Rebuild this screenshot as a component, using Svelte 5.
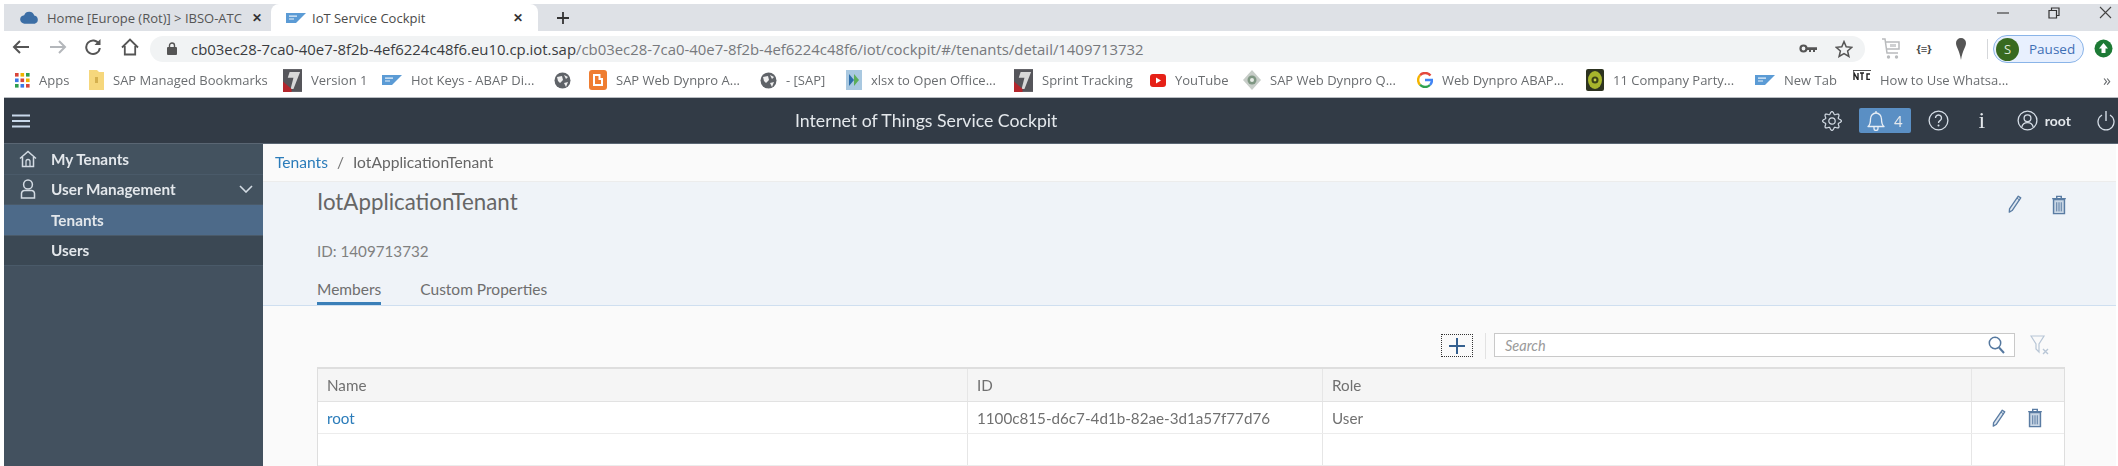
<script lang="ts">
    // bookmarks bar: w is the slot width up to the next item
    const bookmarks = [
        { icon: 'apps', label: 'Apps', w: 74 },
        { icon: 'folder', label: 'SAP Managed Bookmarks', w: 194 },
        { icon: 'flag', label: 'Version 1', w: 99 },
        { icon: 'sap', label: 'Hot Keys - ABAP Di...', w: 172 },
        { icon: 'globe', label: '', w: 35 },
        { icon: 'blogger', label: 'SAP Web Dynpro A...', w: 171 },
        { icon: 'globe', label: '- [SAP]', w: 86 },
        { icon: 'xlsx', label: 'xlsx to Open Office...', w: 168 },
        { icon: 'flag', label: 'Sprint Tracking', w: 136 },
        { icon: 'yt', label: 'YouTube', w: 93 },
        { icon: 'diamond', label: 'SAP Web Dynpro Q...', w: 174 },
        { icon: 'g', label: 'Web Dynpro ABAP...', w: 169 },
        { icon: 'party', label: '11 Company Party...', w: 169 },
        { icon: 'sap', label: 'New Tab', w: 98 },
        { icon: 'ntc', label: 'How to Use Whatsa...', w: 0 },
    ];
    const menu = [
        { label: 'Tenants', cls: 'selected' },
        { label: 'Users', cls: 'sub' },
    ];

    // soft eight-lobed outline for the settings cog
    const gearPath = Array.from({ length: 96 }, (_, i) => {
        const a = (i / 96) * Math.PI * 2;
        const r = 8.1 + 1.3 * Math.cos(a * 8);
        return `${i ? 'L' : 'M'}${(10 + r * Math.cos(a)).toFixed(2)} ${(10 + r * Math.sin(a)).toFixed(2)}`;
    }).join('') + 'Z';
</script>

{#snippet sapLogo()}
    <svg width="20" height="10" viewBox="0 0 20 10">
        <path d="M0 0H20L10 10H0Z" fill="#5b9bd5" />
        <path d="M3 3.2H11M3 6H8" stroke="#e8f1fa" stroke-width="1.2" />
    </svg>
{/snippet}

{#snippet flagLogo()}
    <svg width="19" height="23" viewBox="0 0 20 24">
        <rect width="20" height="24" fill="#55555a" />
        <path d="M7 3H18L11 21H8L11 9H5Z" fill="#d8d8d8" />
        <path d="M0 13L9 21V24H0Z" fill="#b3262c" />
    </svg>
{/snippet}

{#snippet globe()}
    <svg width="17" height="17" viewBox="0 0 17 17">
        <circle cx="8.5" cy="8.5" r="8" fill="#5f6368" />
        <path d="M3 5L8 4L9 8L6 11L4 9ZM10 3L14 5L12 7ZM10 11L14 10L12 15Z" fill="#eee" />
    </svg>
{/snippet}

{#snippet pencil()}
    <svg width="14" height="18" viewBox="0 0 17 22" fill="none">
        <path d="M12.5 1.5L15.5 3.5L5 19L1.5 21L1.8 17Z" fill="#dfe7f0" stroke="#5a7ca3" stroke-width="1.6" stroke-linejoin="round" />
        <path d="M11 4L14 6" stroke="#5a7ca3" stroke-width="1.2" />
    </svg>
{/snippet}

{#snippet trash()}
    <svg width="16" height="20" viewBox="0 0 17 22" fill="none">
        <path d="M1 4H16M6 3.5V1.5H11V3.5" stroke="#5a7ca3" stroke-width="1.6" />
        <path d="M2.5 5H14.5V20.5H2.5Z" fill="#c9d6e4" stroke="#5a7ca3" stroke-width="1.6" />
        <path d="M6 8V18M8.5 8V18M11 8V18" stroke="#5a7ca3" stroke-width="1.1" />
    </svg>
{/snippet}

<div class="page">
    <div class="strip">
        <div class="tab first">
            <svg class="cloud" width="20" height="13" viewBox="0 0 20 13">
                <path d="M5 13A4.5 4.5 0 0 1 4.4 4A5.6 5.6 0 0 1 15 4.4A4.4 4.4 0 0 1 15.5 13Z" fill="#3c6ea5" />
            </svg>
            <span class="tab-title clip">Home [Europe (Rot)] &gt; IBSO-ATC</span>
            <span class="tab-x">✕</span>
        </div>
        <div class="tab active">
            <span class="tab-icon">{@render sapLogo()}</span>
            <span class="tab-title">IoT Service Cockpit</span>
            <span class="tab-x">✕</span>
        </div>
        <svg class="plus" width="14" height="14" viewBox="0 0 14 14">
            <path d="M7 1V13M1 7H13" stroke="#333" stroke-width="1.8" />
        </svg>
        <div class="win">
            <svg width="12" height="12" viewBox="0 0 12 12"><path d="M0 6H12" stroke="#444" stroke-width="1.2" /></svg>
            <svg width="12" height="12" viewBox="0 0 12 12" fill="none"><path d="M1 3.5H8.5V11H1ZM3.5 3V1H11V8.5H9" stroke="#333" stroke-width="1.2" /></svg>
            <svg width="13" height="13" viewBox="0 0 13 13"><path d="M1 1L12 12M12 1L1 12" stroke="#444" stroke-width="1.1" /></svg>
        </div>
    </div>

    <div class="toolbar">
        <svg class="nav" width="20" height="16" viewBox="0 0 20 16" fill="none"><path d="M18 8H3M9 2L3 8L9 14" stroke="#555" stroke-width="2" /></svg>
        <svg class="nav fwd" width="20" height="16" viewBox="0 0 20 16" fill="none"><path d="M2 8H17M11 2L17 8L11 14" stroke="#b4b7bb" stroke-width="2" /></svg>
        <svg class="nav rel" width="18" height="18" viewBox="0 0 18 18" fill="none"><path d="M15 6A6.8 6.8 0 1 0 15.8 10" stroke="#555" stroke-width="2" /><path d="M16.5 1V7H10.5Z" fill="#555" /></svg>
        <svg class="nav home" width="18" height="18" viewBox="0 0 18 18" fill="none"><path d="M1 9.5L9 1.5L17 9.5M3.8 8V16.5H14.2V8" stroke="#555" stroke-width="1.8" /></svg>
        <div class="omnibox">
            <svg class="lock" width="10" height="13" viewBox="0 0 10 13"><rect y="5" width="10" height="8" rx="1" fill="#555" /><path d="M2.5 5.5V3.5A2.5 2.5 0 0 1 7.5 3.5V5.5" fill="none" stroke="#555" stroke-width="1.4" /></svg>
            <span class="url"><b>cb03ec28-7ca0-40e7-8f2b-4ef6224c48f6.eu10.cp.iot.sap</b>/cb03ec28-7ca0-40e7-8f2b-4ef6224c48f6/iot/cockpit/#/tenants/detail/1409713732</span>
            <svg class="key" width="18" height="9" viewBox="0 0 18 9"><circle cx="4.5" cy="4.5" r="3" fill="none" stroke="#555" stroke-width="2.2" /><path d="M7 3.3H18V6H16V8H14V6H12V8H10V6H7Z" fill="#555" /></svg>
            <svg class="star" width="18" height="18" viewBox="0 0 18 18"><path d="M9 1.6L11.2 6.8L16.8 7.3L12.6 11L13.9 16.5L9 13.6L4.1 16.5L5.4 11L1.2 7.3L6.8 6.8Z" fill="none" stroke="#555" stroke-width="1.5" /></svg>
        </div>
        <svg class="ext cart" width="20" height="22" viewBox="0 0 20 22" fill="none"><path d="M1 1H4L6 15H17M5 4H18V11H6" stroke="#b9bbbd" stroke-width="1.5" /><path d="M9 6H15V9H9Z" fill="#cfd0d2" /><circle cx="7.5" cy="19" r="1.7" fill="#b9bbbd" /><circle cx="15.5" cy="19" r="1.7" fill="#b9bbbd" /></svg>
        <span class="ext braces">{'{≡}'}</span>
        <svg class="ext pin" width="10" height="22" viewBox="0 0 10 22"><path d="M5 0A5 5 0 0 1 10 5C10 9 6.5 12 5 22C3.5 12 0 9 0 5A5 5 0 0 1 5 0Z" fill="#555" /></svg>
        <span class="tool-sep"></span>
        <div class="paused">
            <span class="avatar">S</span>
            <span class="paused-label">Paused</span>
        </div>
        <svg class="update" width="19" height="19" viewBox="0 0 19 19"><circle cx="9.5" cy="9.5" r="9" fill="#1d7a35" /><path d="M9.5 4L14 9.5H11.5V14H7.5V9.5H5Z" fill="#fff" /></svg>
    </div>

    <div class="bookmarks">
        {#each bookmarks as b}
            <div class="bookmark" style:width={b.w ? b.w + 'px' : 'auto'}>
                <span class="bm-icon">
                    {#if b.icon === 'apps'}
                        <svg width="15" height="15" viewBox="0 0 15 15">
                            {#each [0, 1, 2] as row}
                                {#each [0, 1, 2] as col}
                                    <rect x={col * 5.5} y={row * 5.5} width="3.6" height="3.6" fill={['#d9453a', '#f0b400', '#2f9e4f', '#3b78e7', '#d9453a', '#f0b400', '#2f9e4f', '#3b78e7', '#d9453a'][row * 3 + col]} />
                                {/each}
                            {/each}
                        </svg>
                    {:else if b.icon === 'folder'}
                        <svg width="15" height="22" viewBox="0 0 15 22"><path d="M0 1H8L10 3H15V21H0Z" fill="#f6d77c" /><path d="M6 8H9V14H6Z" fill="#d5b04e" /></svg>
                    {:else if b.icon === 'flag'}
                        {@render flagLogo()}
                    {:else if b.icon === 'sap'}
                        {@render sapLogo()}
                    {:else if b.icon === 'globe'}
                        {@render globe()}
                    {:else if b.icon === 'blogger'}
                        <svg width="18" height="20" viewBox="0 0 18 20"><rect width="18" height="20" rx="3" fill="#ef7d31" /><path d="M5 5H10.5V9H13V15H5Z" fill="none" stroke="#fff" stroke-width="2" /></svg>
                    {:else if b.icon === 'xlsx'}
                        <svg width="16" height="20" viewBox="0 0 16 20"><rect width="16" height="20" fill="#a9c8e0" /><path d="M3 4L8 10L3 16Z" fill="#2a6ca8" /><path d="M8 4L13 10L8 16Z" fill="#5cae58" /></svg>
                    {:else if b.icon === 'yt'}
                        <svg width="16" height="13" viewBox="0 0 16 13"><rect width="16" height="13" rx="3" fill="#e62117" /><path d="M6 3.5L11 6.5L6 9.5Z" fill="#fff" /></svg>
                    {:else if b.icon === 'diamond'}
                        <svg width="18" height="20" viewBox="0 0 18 20"><path d="M9 0L18 10L9 20L0 10Z" fill="#c7cdc8" /><circle cx="9" cy="10" r="4.5" fill="#7f9783" /><circle cx="9" cy="10" r="2" fill="#e6ebe6" /></svg>
                    {:else if b.icon === 'g'}
                        <svg width="16" height="16" viewBox="0 0 16 16" fill="none">
                            <path d="M13.5 3.5A7 7 0 0 0 3 3.2" stroke="#e4483c" stroke-width="2.4" />
                            <path d="M3 3.2A7 7 0 0 0 3 12.8" stroke="#f4b400" stroke-width="2.4" />
                            <path d="M3 12.8A7 7 0 0 0 13 13" stroke="#2ea24f" stroke-width="2.4" />
                            <path d="M13 13A7 7 0 0 0 15 8H8" stroke="#4285f4" stroke-width="2.4" />
                        </svg>
                    {:else if b.icon === 'party'}
                        <svg width="18" height="22" viewBox="0 0 18 22"><rect width="18" height="22" rx="2" fill="#2d3320" /><ellipse cx="9" cy="11" rx="7" ry="9" fill="#a7b52c" /><circle cx="9" cy="11" r="3.5" fill="#3c4318" /><circle cx="9" cy="11" r="1.4" fill="#c6d24a" /></svg>
                    {:else if b.icon === 'ntc'}
                        <svg class="ntc" width="18" height="10" viewBox="0 0 18 10"><path d="M0 0H18" stroke="#222" stroke-width="1.6" /><path d="M1 10V3L5 10V3M7 3H11M9 3V10M17 4H14V9.5H17" fill="none" stroke="#222" stroke-width="1.4" /></svg>
                    {/if}
                </span>
                {#if b.label}<span class="bm-label">{b.label}</span>{/if}
            </div>
        {/each}
        <span class="more">»</span>
    </div>

    <header class="shell">
        <svg class="burger" width="18" height="14" viewBox="0 0 18 14"><path d="M0 1.5H18M0 7H18M0 12.5H18" stroke="#c8d8ea" stroke-width="1.8" /></svg>
        <span class="shell-title">Internet of Things Service Cockpit</span>
        <div class="shell-actions">
            <svg class="gear" width="20" height="20" viewBox="0 0 20 20" fill="none">
                <path d={gearPath} stroke="#d5dde6" stroke-width="1.2" stroke-linejoin="round" />
                <circle cx="10" cy="10" r="3.2" stroke="#d5dde6" stroke-width="1.2" />
            </svg>
            <div class="bell">
                <svg width="18" height="21" viewBox="0 0 18 21" fill="none"><path d="M1 16.5C3 15 3.5 13 3.5 9A5.5 6 0 0 1 14.5 9C14.5 13 15 15 17 16.5ZM7 17V18.5A2 2 0 0 0 11 18.5V17" stroke="#e8eef5" stroke-width="1.3" stroke-linejoin="round" /><path d="M9 3V1" stroke="#e8eef5" stroke-width="1.3" /></svg>
                <span>4</span>
            </div>
            <svg class="help" width="21" height="21" viewBox="0 0 21 21" fill="none"><circle cx="10.5" cy="10.5" r="9.4" stroke="#d5dde6" stroke-width="1.3" /><path d="M7.5 8A3 3 0 1 1 12 10.6C11 11.2 10.5 11.8 10.5 13" stroke="#d5dde6" stroke-width="1.4" /><circle cx="10.5" cy="15.5" r="1" fill="#d5dde6" /></svg>
            <span class="info">i</span>
            <svg class="user" width="21" height="21" viewBox="0 0 21 21" fill="none"><circle cx="10.5" cy="10.5" r="9.4" stroke="#d5dde6" stroke-width="1.3" /><circle cx="10.5" cy="8.2" r="3.4" stroke="#d5dde6" stroke-width="1.3" /><path d="M4.8 17C5.5 14 8 12.6 10.5 12.6S15.5 14 16.2 17" stroke="#d5dde6" stroke-width="1.3" /></svg>
            <span class="who">root</span>
            <svg class="power" width="18" height="22" viewBox="0 0 18 22" fill="none"><path d="M9 1V11" stroke="#d5dde6" stroke-width="1.4" /><path d="M5 5A8 8 0 1 0 13 5" stroke="#d5dde6" stroke-width="1.3" /></svg>
        </div>
    </header>

    <div class="body">
        <nav class="side">
            <div class="side-row top">
                <svg class="side-icon" width="18" height="18" viewBox="0 0 18 18" fill="none"><path d="M1 8.5L9 1.5L17 8.5M3.5 7V16.5H14.5V7" stroke="#d3dbe3" stroke-width="1.5" /><path d="M7 16.5V11.5A2 2 0 0 1 11 11.5V16.5" stroke="#d3dbe3" stroke-width="1.3" /></svg>
                <span>My Tenants</span>
            </div>
            <div class="side-row top">
                <svg class="side-icon" width="18" height="20" viewBox="0 0 18 20" fill="none"><ellipse cx="9" cy="5.5" rx="4.4" ry="4.6" stroke="#d3dbe3" stroke-width="1.5" /><path d="M2.5 19V14.5A3 3 0 0 1 5.5 11.5H12.5A3 3 0 0 1 15.5 14.5V19Z" stroke="#d3dbe3" stroke-width="1.5" /></svg>
                <span>User Management</span>
                <svg class="chev" width="14" height="8" viewBox="0 0 14 8" fill="none"><path d="M1 1L7 7L13 1" stroke="#d3dbe3" stroke-width="1.6" /></svg>
            </div>
            {#each menu as m}
                <div class="side-row {m.cls}"><span>{m.label}</span></div>
            {/each}
        </nav>

        <main class="content">
            <div class="crumbs">
                <a href="#tenants">Tenants</a>
                <span class="slash">/</span>
                <span>IotApplicationTenant</span>
            </div>

            <section class="object">
                <div class="object-actions">
                    <span class="act">{@render pencil()}</span>
                    <span class="act">{@render trash()}</span>
                </div>
                <h1>IotApplicationTenant</h1>
                <p class="obj-id">ID: 1409713732</p>
                <div class="tabs">
                    <span class="obj-tab on">Members</span>
                    <span class="obj-tab">Custom Properties</span>
                </div>
            </section>

            <section class="members">
                <div class="table-tools">
                    <span class="add">
                        <svg width="18" height="18" viewBox="0 0 18 18"><path d="M9 1V17M1 9H17" stroke="#35608f" stroke-width="2" /></svg>
                    </span>
                    <span class="tools-sep"></span>
                    <div class="search">
                        <span>Search</span>
                        <svg width="17" height="18" viewBox="0 0 17 18" fill="none"><circle cx="7" cy="7" r="5.7" stroke="#55789f" stroke-width="1.5" /><path d="M11 11.5L16 17" stroke="#55789f" stroke-width="2" /></svg>
                    </div>
                    <svg class="filter" width="20" height="20" viewBox="0 0 20 20" fill="none"><path d="M1 1H14L9 9V17L6 14V9Z" stroke="#b8c6d6" stroke-width="1.2" /><path d="M13 14L18 19M18 14L13 19" stroke="#b8c6d6" stroke-width="1.4" /></svg>
                </div>

                <div class="table">
                    <div class="tr head">
                        <div class="td">Name</div>
                        <div class="td">ID</div>
                        <div class="td">Role</div>
                        <div class="td"></div>
                    </div>
                    <div class="tr">
                        <div class="td"><a href="#root">root</a></div>
                        <div class="td">1100c815-d6c7-4d1b-82ae-3d1a57f77d76</div>
                        <div class="td">User</div>
                        <div class="td row-actions">
                            <span class="act">{@render pencil()}</span>
                            <span class="act">{@render trash()}</span>
                        </div>
                    </div>
                    <div class="tr">
                        <div class="td"></div>
                        <div class="td"></div>
                        <div class="td"></div>
                        <div class="td"></div>
                    </div>
                </div>
            </section>
        </main>
    </div>
</div>

<style>
    :global(body) {
        margin: 0;
        background: #fff;
    }
    .page {
        width: 2118px;
        height: 466px;
        overflow: hidden;
        padding: 4px 0 0 4px;
        box-sizing: border-box;
        font-family: "Open Sans", sans-serif;
        filter: blur(0.6px);
        display: flex;
        flex-direction: column;
    }

    /* browser chrome */
    .strip {
        height: 27px;
        flex: none;
        background: #dee1e6;
        display: flex;
        align-items: center;
    }
    .tab {
        height: 100%;
        width: 267px;
        flex: none;
        box-sizing: border-box;
        display: flex;
        align-items: center;
        font-size: 13px;
        color: #555;
    }
    .tab.first {
        padding-left: 16px;
    }
    .cloud {
        margin-right: 8px;
    }
    .tab.active {
        background: #fff;
        border-radius: 8px 8px 0 0;
        padding-left: 15px;
        color: #4a4a4a;
    }
    .tab-icon {
        display: flex;
        margin-right: 6px;
    }
    .tab-title {
        flex: 1;
        white-space: nowrap;
    }
    .clip {
        overflow: hidden;
        flex: none;
        width: 197px;
    }
    .tab-x {
        font-size: 12px;
        font-weight: 700;
        color: #333;
        margin-left: 8px;
        margin-right: 9px;
    }
    .active .tab-x {
        margin-right: 15px;
    }
    .plus {
        margin-left: 18px;
    }
    .win {
        margin-left: auto;
        display: flex;
        align-items: center;
        gap: 39px;
        margin-right: 6px;
        margin-top: -10px;
    }

    .toolbar {
        height: 31px;
        flex: none;
        display: flex;
        align-items: center;
        background: #fff;
    }
    .nav {
        flex: none;
    }
    .toolbar > .nav:first-child {
        margin-left: 7px;
    }
    .fwd {
        margin-left: 17px;
    }
    .rel {
        margin-left: 16px;
    }
    .home {
        margin-left: 19px;
    }
    .omnibox {
        margin-left: 11px;
        width: 1715px;
        height: 26px;
        margin-top: 4px;
        border-radius: 13px;
        background: #f1f3f4;
        display: flex;
        align-items: center;
        padding-left: 17px;
        box-sizing: border-box;
    }
    .url {
        margin-left: 14px;
        font-size: 14.9px;
        color: #77797d;
        white-space: nowrap;
    }
    .url b {
        font-weight: 400;
        color: #3a3c3f;
    }
    .key {
        margin-left: auto;
    }
    .star {
        margin-left: 18px;
        margin-right: 12px;
    }
    .ext {
        flex: none;
    }
    .cart {
        margin-left: 16px;
        margin-top: 4px;
    }
    .braces {
        margin-left: 11px;
        font-size: 11px;
        font-weight: 700;
        color: #444;
        width: 24px;
        text-align: center;
        margin-top: 4px;
    }
    .pin {
        margin-left: 20px;
        margin-top: 4px;
    }
    .tool-sep {
        width: 1px;
        height: 20px;
        background: #d5d7da;
        margin-left: 21px;
        margin-top: 4px;
    }
    .paused {
        margin-left: 5px;
        margin-top: 5px;
        width: 91px;
        height: 28px;
        box-sizing: border-box;
        border: 1.5px solid #8ab4e8;
        border-radius: 14px;
        background: #e8f0fe;
        display: flex;
        align-items: center;
        padding-left: 2px;
        font-size: 13.5px;
    }
    .avatar {
        width: 23px;
        height: 23px;
        border-radius: 50%;
        background: #386a20;
        color: #dfe8d8;
        display: flex;
        align-items: center;
        justify-content: center;
        font-size: 13px;
        margin-right: 10px;
    }
    .paused-label {
        color: #3f6fb5;
    }
    .update {
        margin-left: 10px;
        margin-top: 4px;
    }

    .bookmarks {
        height: 34px;
        flex: none;
        margin-top: 1px;
        border-bottom: 1px solid #b9bdc2;
        display: flex;
        align-items: center;
        padding-left: 11px;
        font-size: 13px;
        color: #6a6d70;
    }
    .bookmark {
        flex: none;
        display: flex;
        align-items: center;
        white-space: nowrap;
    }
    .bm-icon {
        display: flex;
        margin-right: 9px;
    }
    .ntc {
        margin-top: -10px;
    }
    .more {
        margin-left: auto;
        margin-right: 7px;
        font-size: 16px;
    }

    /* app shell */
    .shell {
        height: 45px;
        flex: none;
        background: #323b46;
        display: flex;
        align-items: center;
        border-bottom: 1px solid #5a6673;
    }
    .burger {
        margin-left: 8px;
    }
    .shell-title {
        margin-left: 765px;
        font-family: Lato, sans-serif;
        font-size: 17.7px;
        color: #e4e8ec;
        white-space: nowrap;
    }
    .shell-actions {
        margin-left: auto;
        display: flex;
        align-items: center;
        color: #e4e8ec;
        font-family: Lato, sans-serif;
    }
    .gear {
        margin-right: 17px;
    }
    .bell {
        width: 52px;
        height: 25px;
        border-radius: 2px;
        background: #5a8fc4;
        display: flex;
        align-items: center;
        justify-content: center;
        gap: 9px;
        font-size: 15px;
        margin-right: 17px;
    }
    .help {
        margin-right: 28px;
    }
    .info {
        font-family: "Liberation Serif", serif;
        font-size: 24px;
        width: 10px;
        text-align: center;
        margin-right: 30px;
    }
    .user {
        margin-right: 7px;
    }
    .who {
        font-size: 14px;
        font-weight: 700;
        margin-right: 26px;
    }
    .power {
        margin-right: 3px;
    }

    .body {
        flex: 1;
        display: flex;
        min-height: 0;
    }
    .side {
        width: 259px;
        flex: none;
        background: #43515f;
        font-family: Lato, sans-serif;
        font-size: 15.3px;
        font-weight: 700;
        color: #e3e7eb;
    }
    .side-row {
        height: 30.5px;
        display: flex;
        align-items: center;
        padding-left: 47px;
        box-sizing: border-box;
        border-bottom: 1px solid #4a5a69;
    }
    .side-row.top {
        padding-left: 12px;
        background: #43525f;
    }
    .side-icon {
        width: 24px;
        flex: none;
        margin-right: 11px;
    }
    .chev {
        margin-left: auto;
        margin-right: 10px;
    }
    .selected {
        background: #4d6a89;
    }
    .sub {
        background: #3b4854;
    }

    /* tenant detail */
    .content {
        flex: 1;
        min-width: 0;
        background: #fafafa;
        font-family: Lato, sans-serif;
        color: #666;
        margin-right: 2px;
    }
    .crumbs {
        height: 38px;
        box-sizing: border-box;
        padding: 0 0 2px 12px;
        display: flex;
        align-items: center;
        gap: 9px;
        font-size: 15.6px;
        border-bottom: 1px solid #ececec;
    }
    a {
        color: #2b7cba;
        text-decoration: none;
    }
    .slash {
        color: #777;
    }
    .object {
        height: 124px;
        box-sizing: border-box;
        background: #eff3f8;
        border-bottom: 1px solid #cfdff0;
        padding-left: 54px;
        position: relative;
    }
    .object-actions {
        position: absolute;
        top: 13px;
        right: 49px;
        display: flex;
        gap: 29px;
    }
    .act {
        display: flex;
    }
    h1 {
        margin: 0;
        padding-top: 6px;
        font-size: 22.3px;
        font-weight: 400;
        color: #666;
        line-height: 28px;
    }
    .obj-id {
        margin: 0;
        padding-top: 25px;
        font-size: 15.2px;
        line-height: 20px;
        color: #808080;
    }
    .tabs {
        display: flex;
        gap: 39px;
        margin-top: 18px;
        font-size: 15.5px;
    }
    .obj-tab {
        height: 23px;
        line-height: 20px;
        box-sizing: content-box;
        color: #6e6e6e;
    }
    .obj-tab.on {
        border-bottom: 3px solid #3a7fb8;
    }

    .members {
        padding-left: 54px;
    }
    .table-tools {
        height: 61px;
        box-sizing: border-box;
        padding-top: 27px;
        width: 1800px;
        display: flex;
        align-items: flex-start;
        margin-left: -54px;
        padding-left: 1178px;
    }
    .add {
        width: 32px;
        height: 23px;
        margin-top: 1px;
        box-sizing: border-box;
        border: 1px dotted #333;
        display: flex;
        align-items: center;
        justify-content: center;
    }
    .tools-sep {
        width: 1px;
        height: 26px;
        background: #e2e2e2;
        margin: 0 8px 0 12px;
    }
    .search {
        width: 521px;
        height: 24px;
        box-sizing: border-box;
        background: #fff;
        border: 1px solid #c9c9c9;
        display: flex;
        align-items: center;
        justify-content: space-between;
        padding: 0 9px 0 10px;
        font-style: italic;
        font-size: 14.5px;
        color: #9a9a9a;
    }
    .filter {
        margin: 2px 0 0 15px;
    }
    .table {
        width: 1746px;
        border: 1px solid #dedede;
        border-top-width: 2px;
        border-bottom: 0;
        font-size: 15.2px;
        color: #707070;
        background: #fff;
    }
    .tr {
        display: grid;
        grid-template-columns: 649px 355px 649px 1fr;
        height: 31px;
        border-bottom: 1px solid #ececec;
    }
    .tr.head {
        height: 32px;
        background: #f5f5f5;
        border-bottom-color: #e2e2e2;
    }
    .td {
        display: flex;
        align-items: center;
        padding-left: 9px;
        border-left: 1px solid #e6e6e6;
    }
    .td:first-child {
        border-left: 0;
    }
    .row-actions {
        gap: 21px;
        padding-left: 20px;
    }
</style>
